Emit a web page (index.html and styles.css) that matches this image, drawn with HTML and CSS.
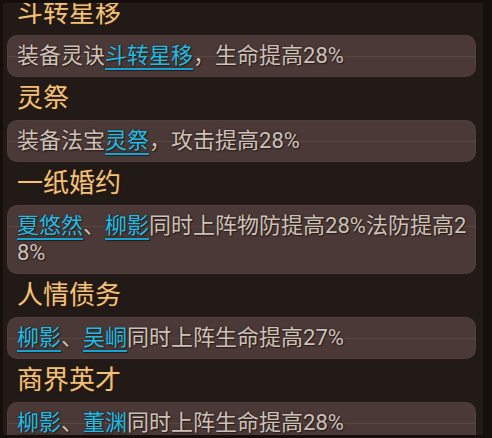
FILE: index.html
```html
<!DOCTYPE html>
<html lang="zh-CN">
<head>
<meta charset="utf-8">
<title>缘分加成</title>
<link rel="stylesheet" href="styles.css">
</head>
<body>
<div class="panel">
  <ul class="bond-list">
    <li class="bond">
      <h3 class="bond-title">斗转星移</h3>
      <p class="bond-desc">装备灵诀<span class="link">斗转星移</span>，生命提高28%</p>
    </li>
    <li class="bond">
      <h3 class="bond-title">灵祭</h3>
      <p class="bond-desc">装备法宝<span class="link">灵祭</span>，攻击提高28%</p>
    </li>
    <li class="bond">
      <h3 class="bond-title">一纸婚约</h3>
      <p class="bond-desc"><span class="link">夏悠然</span>、<span class="link">柳影</span>同时上阵物防提高28%法防提高28%</p>
    </li>
    <li class="bond">
      <h3 class="bond-title">人情债务</h3>
      <p class="bond-desc"><span class="link">柳影</span>、<span class="link">吴峒</span>同时上阵生命提高27%</p>
    </li>
    <li class="bond">
      <h3 class="bond-title">商界英才</h3>
      <p class="bond-desc"><span class="link">柳影</span>、<span class="link">董渊</span>同时上阵生命提高28%</p>
    </li>
  </ul>
</div>
</body>
</html>
```
FILE: styles.css
```css
html, body {
  margin: 0;
  padding: 0;
}

body {
  width: 492px;
  height: 438px;
  background: #150f0c;
  overflow: hidden;
  font-family: Roboto, "Noto Sans CJK SC", sans-serif;
}

.panel {
  margin: 3px 0 0 3px;
  width: 480px;
  height: 432px;
  background: #221a16;
  overflow: hidden;
}

.bond-list {
  list-style: none;
  margin: -11px 0 0 0;
  padding: 0 0 0 4px;
}

.bond-title {
  margin: 0;
  height: 43px;
  line-height: 43px;
  padding-left: 10px;
  font-size: 26px;
  font-weight: 400;
  color: #f1c27a;
  text-shadow: 0 0 2px #3b2412, 1px 1px 1px #2a180c;
}

.bond-desc {
  margin: 0;
  width: 469px;
  box-sizing: border-box;
  padding: 7px 4px 8px 10px;
  border-radius: 10px;
  font-size: 22px;
  line-height: 27px;
  word-break: break-all;
  color: #cdc2ba;
  text-shadow: 0 0 2px #2b1d19, 1px 1px 1px #2b1d19;
  background-color: #4a3937;
  background-image: linear-gradient(to bottom, transparent 21px, #58473f 21px, #58473f 22px, transparent 22px);
  box-shadow: inset 0 0 0 1px #503f3c;
}

.link {
  color: #1fbde6;
  text-decoration: underline;
  text-decoration-color: #14a3d3;
  text-decoration-thickness: 2px;
  text-underline-offset: 5px;
}
```
